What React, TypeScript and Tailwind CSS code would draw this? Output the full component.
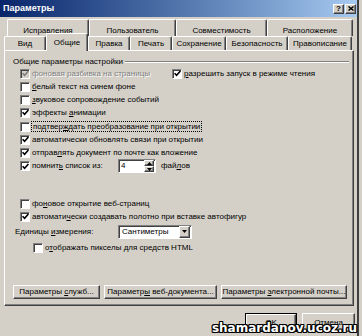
import React from "react";

const raised =
  "border border-t-white border-l-white border-r-[#404040] border-b-[#404040] shadow-[inset_-1px_-1px_0_#808080]";
const sunken =
  "border border-t-[#808080] border-l-[#808080] border-r-white border-b-white shadow-[inset_1px_1px_0_#404040]";

function Box({ checked, disabled }: { checked?: boolean; disabled?: boolean }) {
  return (
    <span
      className={`w-[10px] h-[10px] shrink-0 flex items-center justify-center ${sunken} ${
        disabled ? "bg-[#d4d0c8]" : "bg-white"
      }`}
    >
      {checked && (
        <svg width="7" height="7" viewBox="0 0 7 7">
          <path
            d="M0.6 3.2 L2.6 5.3 L6.4 1"
            fill="none"
            stroke={disabled ? "#808080" : "#000"}
            strokeWidth="1.6"
          />
        </svg>
      )}
    </span>
  );
}

function Row({
  checked,
  disabled,
  children,
  className = "",
}: {
  checked?: boolean;
  disabled?: boolean;
  children: React.ReactNode;
  className?: string;
}) {
  return (
    <div className={`h-[13px] flex items-center gap-[2px] ${className}`}>
      <Box checked={checked} disabled={disabled} />
      <span
        className={
          disabled ? "text-[#808080] [text-shadow:1px_1px_0_#fff]" : "text-black"
        }
      >
        {children}
      </span>
    </div>
  );
}

const row1 = [
  { t: "Исправления", w: "w-[82px]" },
  { t: "Пользователь", w: "w-[87px]" },
  { t: "Совместимость", w: "w-[91px]" },
  { t: "Расположение", w: "w-[86px]" },
];

const row2 = [
  { t: "Вид", w: "w-[42px]" },
  { t: "Общие", w: "w-[42px]", active: true },
  { t: "Правка", w: "w-[42px]" },
  { t: "Печать", w: "w-[42px]" },
  { t: "Сохранение", w: "w-[54px]" },
  { t: "Безопасность", w: "w-[62px]" },
  { t: "Правописание", w: "w-[64px]" },
];

const tabCls =
  "bg-[#d4d0c8] border-t border-l border-white border-r border-r-[#404040] shadow-[inset_-1px_0_0_#808080] rounded-t-[2px] flex justify-center";

export default function App() {
  return (
    <div className="w-[362px] h-[336px] overflow-hidden relative bg-[#d4d0c8] font-['Liberation_Sans',Arial,sans-serif] text-[8px] leading-none text-black">
      <div className="w-[359px] h-[345px] border-r-2 border-r-[#404040] bg-[#d4d0c8]">
        {/* title bar */}
        <div className="h-[17px] bg-linear-to-r from-[#0a246a] to-[#a6caf0] flex items-center pl-[3px] pr-[1px]">
          <span className="text-white font-bold text-[9px] flex-1">Параметры</span>
          <div className="flex gap-[1px]">
            <span className={`w-[11px] h-[10px] bg-[#d4d0c8] ${raised} flex items-center justify-center font-bold text-[8px]`}>
              ?
            </span>
            <span className={`w-[11px] h-[10px] bg-[#d4d0c8] ${raised} flex items-center justify-center`}>
              <svg width="6" height="5" viewBox="0 0 6 5">
                <path d="M0.5 0.5 L5.5 4.5 M5.5 0.5 L0.5 4.5" stroke="#000" strokeWidth="1.4" />
              </svg>
            </span>
          </div>
        </div>

        {/* tabs */}
        <div className="mt-[2px] ml-[7px] h-[17px] flex">
          {row1.map((t) => (
            <div key={t.t} className={`${tabCls} ${t.w} h-[17px] pt-[7px]`}>
              {t.t}
            </div>
          ))}
        </div>
        <div className="ml-[4px] h-[14px] flex items-end">
          {row2.map((t) =>
            t.active ? (
              <div
                key={t.t}
                className={`${tabCls} ${t.w} h-[18px] -mb-[1px] relative z-10 items-center`}
              >
                {t.t}
              </div>
            ) : (
              <div key={t.t} className={`${tabCls} ${t.w} h-[14px] items-center`}>
                {t.t}
              </div>
            )
          )}
        </div>

        {/* panel */}
        <div className="ml-[4px] w-[350px] h-[256px] border border-t-white border-l-white border-r-[#404040] border-b-[#404040] shadow-[inset_-1px_-1px_0_#808080] flex flex-col">
          <div className="mt-[5px] h-[11px] flex items-center pl-[8px] pr-[4px] gap-[2px]">
            <span>Общие параметры настройки</span>
            <span className="flex-1 h-[2px] border-t border-t-[#808080] border-b border-b-white" />
          </div>

          <div className="pl-[15px] flex flex-col">
            <div className="flex">
              <div className="w-[152px]">
                <Row checked disabled>
                  фоновая разбивка на страницы
                </Row>
              </div>
              <Row checked>
                <u>р</u>азрешить запуск в режиме чтения
              </Row>
            </div>
            <Row>
              <u>б</u>елый текст на синем фоне
            </Row>
            <Row>
              <u>з</u>вуковое сопровождение событий
            </Row>
            <Row checked>
              эффекты <u>а</u>нимации
            </Row>
            <div className="mt-[1px] h-[13px] flex items-center gap-[1px]">
              <Box />
              <span className="border border-dotted border-black px-[1px] h-[11px] flex items-center">
                <span>
                  подтвер<u>ж</u>дать преобразование при открытии
                </span>
              </span>
            </div>
            <Row checked>автоматически обновлять связи при открытии</Row>
            <Row checked>
              отправ<u>л</u>ять документ по почте как вложение
            </Row>
            <div className="h-[14px] flex items-center">
              <div className="w-[98px] flex items-center gap-[2px]">
                <Box checked />
                <span>
                  помнит<u>ь</u> список из:
                </span>
              </div>
              <div className={`w-[38px] h-[14px] bg-white ${sunken} flex items-center`}>
                <span className="flex-1 pl-[2px]">4</span>
                <div className="w-[10px] h-[12px] flex flex-col mr-[1px]">
                  <span className={`flex-1 bg-[#d4d0c8] ${raised} flex items-center justify-center`}>
                    <svg width="5" height="3" viewBox="0 0 5 3">
                      <path d="M0 3 L2.5 0 L5 3 Z" fill="#000" />
                    </svg>
                  </span>
                  <span className={`flex-1 bg-[#d4d0c8] ${raised} flex items-center justify-center`}>
                    <svg width="5" height="3" viewBox="0 0 5 3">
                      <path d="M0 0 L2.5 3 L5 0 Z" fill="#000" />
                    </svg>
                  </span>
                </div>
              </div>
              <span className="ml-[5px]">
                фай<u>л</u>ов
              </span>
            </div>

            <Row className="mt-[24px]">
              фо<u>н</u>овое открытие веб-страниц
            </Row>
            <Row checked>
              автомати<u>ч</u>ески создавать полотно при вставке автофигур
            </Row>
            <div className="mt-[1px] h-[15px] flex items-center -ml-[5px]">
              <span className="w-[103px]">
                Единицы <u>и</u>змерения:
              </span>
              <div className={`w-[74px] h-[14px] bg-white ${sunken} flex items-center`}>
                <span className="flex-1 pl-[3px]">Сантиметры</span>
                <span className={`w-[11px] h-[12px] mr-[1px] bg-[#d4d0c8] ${raised} flex items-center justify-center`}>
                  <svg width="5" height="3" viewBox="0 0 5 3">
                    <path d="M0 0 L2.5 3 L5 0 Z" fill="#000" />
                  </svg>
                </span>
              </div>
            </div>
            <Row className="mt-[2px] ml-[13px]">
              о<u>т</u>ображать пикселы для средств HTML
            </Row>
          </div>

          <div className="mt-[31px] pl-[8px] flex gap-[4px]">
            <span className={`w-[87px] h-[14px] ${raised} flex items-center justify-center`}>
              <span>
                Параметры <u>с</u>лужб...
              </span>
            </span>
            <span className={`w-[113px] h-[14px] ${raised} flex items-center justify-center`}>
              <span>
                Параметр<u>ы</u> веб-документа...
              </span>
            </span>
            <span className={`w-[126px] h-[14px] ${raised} flex items-center justify-center`}>
              <span>
                Параметры <u>э</u>лектронной почты...
              </span>
            </span>
          </div>
        </div>

        {/* dialog buttons */}
        <div className="mt-[7px] flex justify-end gap-[5px] pr-[2px]">
          <span className="w-[52px] h-[19px] border border-black flex">
            <span className={`flex-1 ${raised} flex items-center justify-center`}>OK</span>
          </span>
          <span className={`w-[53px] h-[19px] ${raised} flex items-center justify-center`}>
            Отмена
          </span>
        </div>
      </div>

      <div className="absolute right-[5px] bottom-[2px] font-['DejaVu_Sans',sans-serif] font-bold text-[12px] leading-none text-white [text-shadow:1px_1px_0_#000,-1px_-1px_0_#000,1px_-1px_0_#000,-1px_1px_0_#000,0_1px_0_#000,0_-1px_0_#000,1px_0_0_#000,-1px_0_0_#000]">
        shamardanov.ucoz.ru
      </div>
    </div>
  );
}
